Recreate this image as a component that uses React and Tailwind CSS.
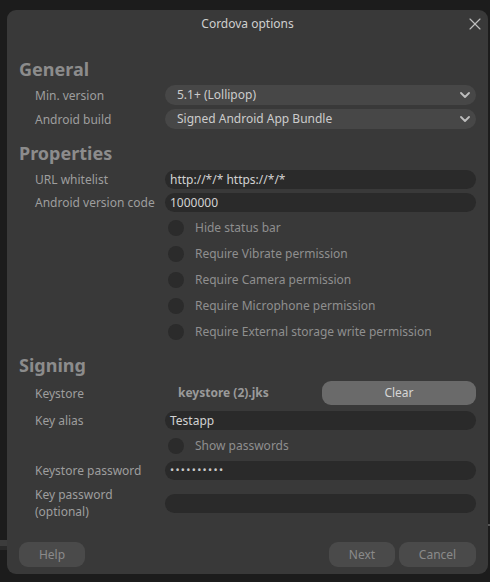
import { X } from "lucide-react";

const font = { fontFamily: '"Noto Sans", "Open Sans", sans-serif' };

function Chevron() {
    return (
        <svg width="10" height="6" viewBox="0 0 10 6" className="shrink-0">
            <path d="M1 1l4 4 4-4" fill="none" stroke="#bdbdbd" strokeWidth="1.8" strokeLinecap="round" strokeLinejoin="round" />
        </svg>
    );
}

function Heading({ children }) {
    return <div className="h-6 leading-6 text-[18px] font-bold text-[#8c8c8c]">{children}</div>;
}

function Select({ value }) {
    return (
        <div className="h-5 rounded-full bg-[#474747] flex items-center justify-between pl-3 pr-[6px] text-[#cccccc]">
            <span>{value}</span>
            <Chevron />
        </div>
    );
}

function Input({ value, dots }) {
    return (
        <div className="h-[19px] rounded-full bg-[#2a2a2a] flex items-center px-[5px] text-[#d2d2d2]">
            {dots ? <span className="text-[11px] tracking-[1.3px] text-[#c8c8c8]">{value}</span> : value}
        </div>
    );
}

function Row({ label, children, className = "" }) {
    return (
        <div className={`grid grid-cols-[130px_1fr] items-center pl-4 ${className}`}>
            <div className="text-[#9e9e9e] leading-[17px]">{label}</div>
            {children}
        </div>
    );
}

function Check({ label, className = "" }) {
    return (
        <div className={`grid grid-cols-[130px_1fr] items-center pl-4 h-[26px] ${className}`}>
            <div />
            <div className="flex items-center gap-[11px] pl-[3px]">
                <div className="w-4 h-4 rounded-full bg-[#2b2b2b]" />
                <span className="text-[#8f8f8f]">{label}</span>
            </div>
        </div>
    );
}

function Button({ children, className = "" }) {
    return (
        <div className={`h-[25px] rounded-[9px] bg-[#4a4a4a] text-[#8a8a8a] flex items-center justify-center ${className}`}>
            {children}
        </div>
    );
}

export default function App() {
    return (
        <div className="relative w-[490px] h-[582px] bg-[#1c1c1c] text-[12px] pt-[10px] pl-[7px] overflow-hidden" style={font}>
            {/* bits of the window behind */}
            <div className="absolute left-0 top-[540px] w-[7px] h-[6px] bg-[#3c3c3c]" />
            <div className="absolute left-0 top-[546px] w-[7px] h-[4px] bg-[#2a2a2a]" />
            <div className="absolute right-0 top-[524px] w-[2px] h-[2px] bg-[#555]" />

            <div className="relative w-[481px] h-[564px] rounded-[9px] bg-[#393939] flex flex-col px-3">
                <div className="h-7 flex items-center justify-center text-[#cfcfcf]">Cordova options</div>
                <X size={20} strokeWidth={1.4} className="absolute right-[3px] top-[4px] text-[#bdbdbd]" />

                <div className="mt-[19px]">
                    <Heading>General</Heading>
                    <div className="flex flex-col gap-1 mt-1">
                        <Row label="Min. version"><Select value="5.1+ (Lollipop)" /></Row>
                        <Row label="Android build"><Select value="Signed Android App Bundle" /></Row>
                    </div>
                </div>

                <div className="mt-3">
                    <Heading>Properties</Heading>
                    <div className="flex flex-col gap-1 mt-[5px]">
                        <Row label="URL whitelist"><Input value="http://*/* https://*/*" /></Row>
                        <Row label="Android version code"><Input value="1000000" /></Row>
                    </div>
                    <div className="flex flex-col mt-[3px]">
                        <Check label="Hide status bar" />
                        <Check label="Require Vibrate permission" />
                        <Check label="Require Camera permission" />
                        <Check label="Require Microphone permission" />
                        <Check label="Require External storage write permission" />
                    </div>
                </div>

                <div className="mt-[8px]">
                    <Heading>Signing</Heading>
                    <Row label="Keystore" className="mt-[4px]">
                        <div className="flex items-center">
                            <span className="flex-1 pl-[13px] font-bold text-[#9a9a9a]">keystore (2).jks</span>
                            <div className="w-[154px] h-6 rounded-[9px] bg-[#6a6a6a] text-[#d6d6d6] flex items-center justify-center">Clear</div>
                        </div>
                    </Row>
                    <Row label="Key alias" className="mt-[6px]"><Input value="Testapp" /></Row>
                    <Check label="Show passwords" className="mt-[3px]" />
                    <Row label="Keystore password" className="mt-[2px]"><Input value="••••••••••" dots /></Row>
                    <Row label={<>Key password<br />(optional)</>} className="mt-[6px]"><Input value="" /></Row>
                </div>

                <div className="mt-auto mb-[7px] flex items-center">
                    <Button className="w-[66px]">Help</Button>
                    <div className="flex-1" />
                    <Button className="w-[66px]">Next</Button>
                    <Button className="w-[77px] ml-1">Cancel</Button>
                </div>
            </div>
        </div>
    );
}
